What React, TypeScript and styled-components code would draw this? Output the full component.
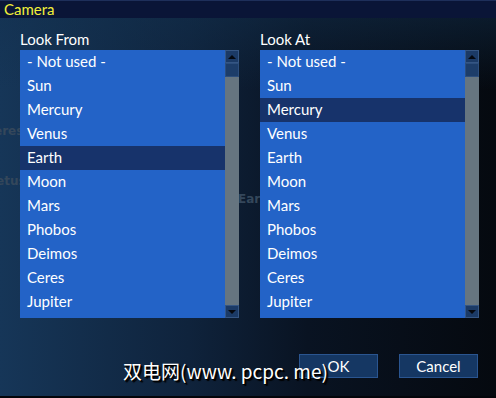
import React from 'react';
import styled, { createGlobalStyle } from 'styled-components';

const BODIES = ['- Not used -', 'Sun', 'Mercury', 'Venus', 'Earth', 'Moon', 'Mars', 'Phobos', 'Deimos', 'Ceres', 'Jupiter'];

const GHOSTS = [
  { text: 'eres', x: -6, y: 124 },
  { text: 'etus', x: -4, y: 174 },
  { text: 'Earth', x: 238, y: 192 },
];

const GlobalStyle = createGlobalStyle`
  html, body {
    margin: 0;
    padding: 0;
    background: #05090f;
  }
  body {
    font-family: Lato, 'Noto Sans', sans-serif;
  }
`;

const Window = styled.div`
  position: relative;
  width: 496px;
  height: 398px;
  overflow: hidden;
  display: flex;
  flex-direction: column;
  background:
    linear-gradient(180deg, rgba(18, 48, 78, 0.55) 0, rgba(18, 48, 78, 0) 90px),
    linear-gradient(90deg, #163658 0%, #0f233c 38%, #091322 62%, #05090f 100%);
  border-bottom: 2px solid #03050a;
  box-sizing: border-box;
`;

const TitleBar = styled.div`
  height: 17px;
  line-height: 17px;
  padding-left: 4px;
  background: #0a1537;
  border-top: 1px solid #1e2f5a;
  color: #f2f03a;
  font-size: 15px;
  flex-shrink: 0;
`;

const Content = styled.div`
  position: relative;
  padding: 12px 17px 0 20px;
  display: flex;
  flex-direction: column;
`;

const Columns = styled.div`
  display: grid;
  grid-template-columns: 219px 219px;
  column-gap: 21px;
`;

const Column = styled.div`
  display: flex;
  flex-direction: column;
`;

const Label = styled.div`
  height: 20px;
  line-height: 19px;
  color: #ffffff;
  font-size: 15px;
`;

const ListBox = styled.div`
  display: flex;
  height: 268px;
`;

const Items = styled.div`
  flex: 1;
  background: #2363c7;
  display: flex;
  flex-direction: column;
`;

const Item = styled.div<{ $selected?: boolean }>`
  height: 24px;
  line-height: 23px;
  padding-left: 7px;
  color: #ffffff;
  font-size: 15px;
  background: ${({ $selected }) => ($selected ? '#17336b' : 'transparent')};
`;

const ScrollBar = styled.div`
  width: 14px;
  display: flex;
  flex-direction: column;
  background: #667580;
`;

const ScrollButton = styled.div`
  height: 13px;
  box-sizing: border-box;
  border: 1px solid #355684;
  background: #1b3a66;
  display: flex;
  align-items: center;
  justify-content: center;
`;

const Thumb = styled.div`
  height: 14px;
  box-sizing: border-box;
  border: 1px solid #2d4e7c;
  background: #1d3d69;
`;

const Track = styled.div`
  flex: 1;
`;

const Arrow = styled.div<{ $down?: boolean }>`
  width: 0;
  height: 0;
  border-left: 4px solid transparent;
  border-right: 4px solid transparent;
  ${({ $down }) => ($down ? 'border-top: 4px solid #05080f;' : 'border-bottom: 4px solid #05080f;')}
`;

const Buttons = styled.div`
  display: flex;
  justify-content: flex-end;
  gap: 21px;
  margin-top: 36px;
  padding-right: 1px;
`;

const Button = styled.div`
  width: 79px;
  height: 24px;
  box-sizing: border-box;
  border: 1px solid #2a5590;
  background: #153763;
  color: #ffffff;
  font-size: 15px;
  line-height: 22px;
  text-align: center;
`;

const Ghost = styled.div`
  position: absolute;
  color: #34475b;
  font-size: 12px;
  font-weight: 700;
  font-family: 'DejaVu Sans', sans-serif;
`;

const Watermark = styled.div`
  position: absolute;
  left: 123px;
  top: 357px;
  color: #ffffff;
  font-size: 19px;
  font-family: 'Noto Sans CJK SC', 'Noto Sans', sans-serif;
  text-shadow: 1px 1px 0 #000, 2px 2px 1px #000;
  white-space: pre;
`;

const List = ({ selected }: { selected: string }) => (
  <ListBox>
    <Items>
      {BODIES.map((b) => (
        <Item key={b} $selected={b === selected}>
          {b}
        </Item>
      ))}
    </Items>
    <ScrollBar>
      <ScrollButton>
        <Arrow />
      </ScrollButton>
      <Thumb />
      <Track />
      <ScrollButton>
        <Arrow $down />
      </ScrollButton>
    </ScrollBar>
  </ListBox>
);

const App = () => {
  return (
    <>
      <GlobalStyle />
      <Window>
        <TitleBar>Camera</TitleBar>
        {GHOSTS.map((g) => (
          <Ghost key={g.text} style={{ left: g.x, top: g.y }}>
            {g.text}
          </Ghost>
        ))}
        <Content>
          <Columns>
            <Column>
              <Label>Look From</Label>
              <List selected="Earth" />
            </Column>
            <Column>
              <Label>Look At</Label>
              <List selected="Mercury" />
            </Column>
          </Columns>
          <Buttons>
            <Button>OK</Button>
            <Button>Cancel</Button>
          </Buttons>
        </Content>
        <Watermark>双电网(www. pcpc. me)</Watermark>
      </Window>
    </>
  );
};

export default App;
